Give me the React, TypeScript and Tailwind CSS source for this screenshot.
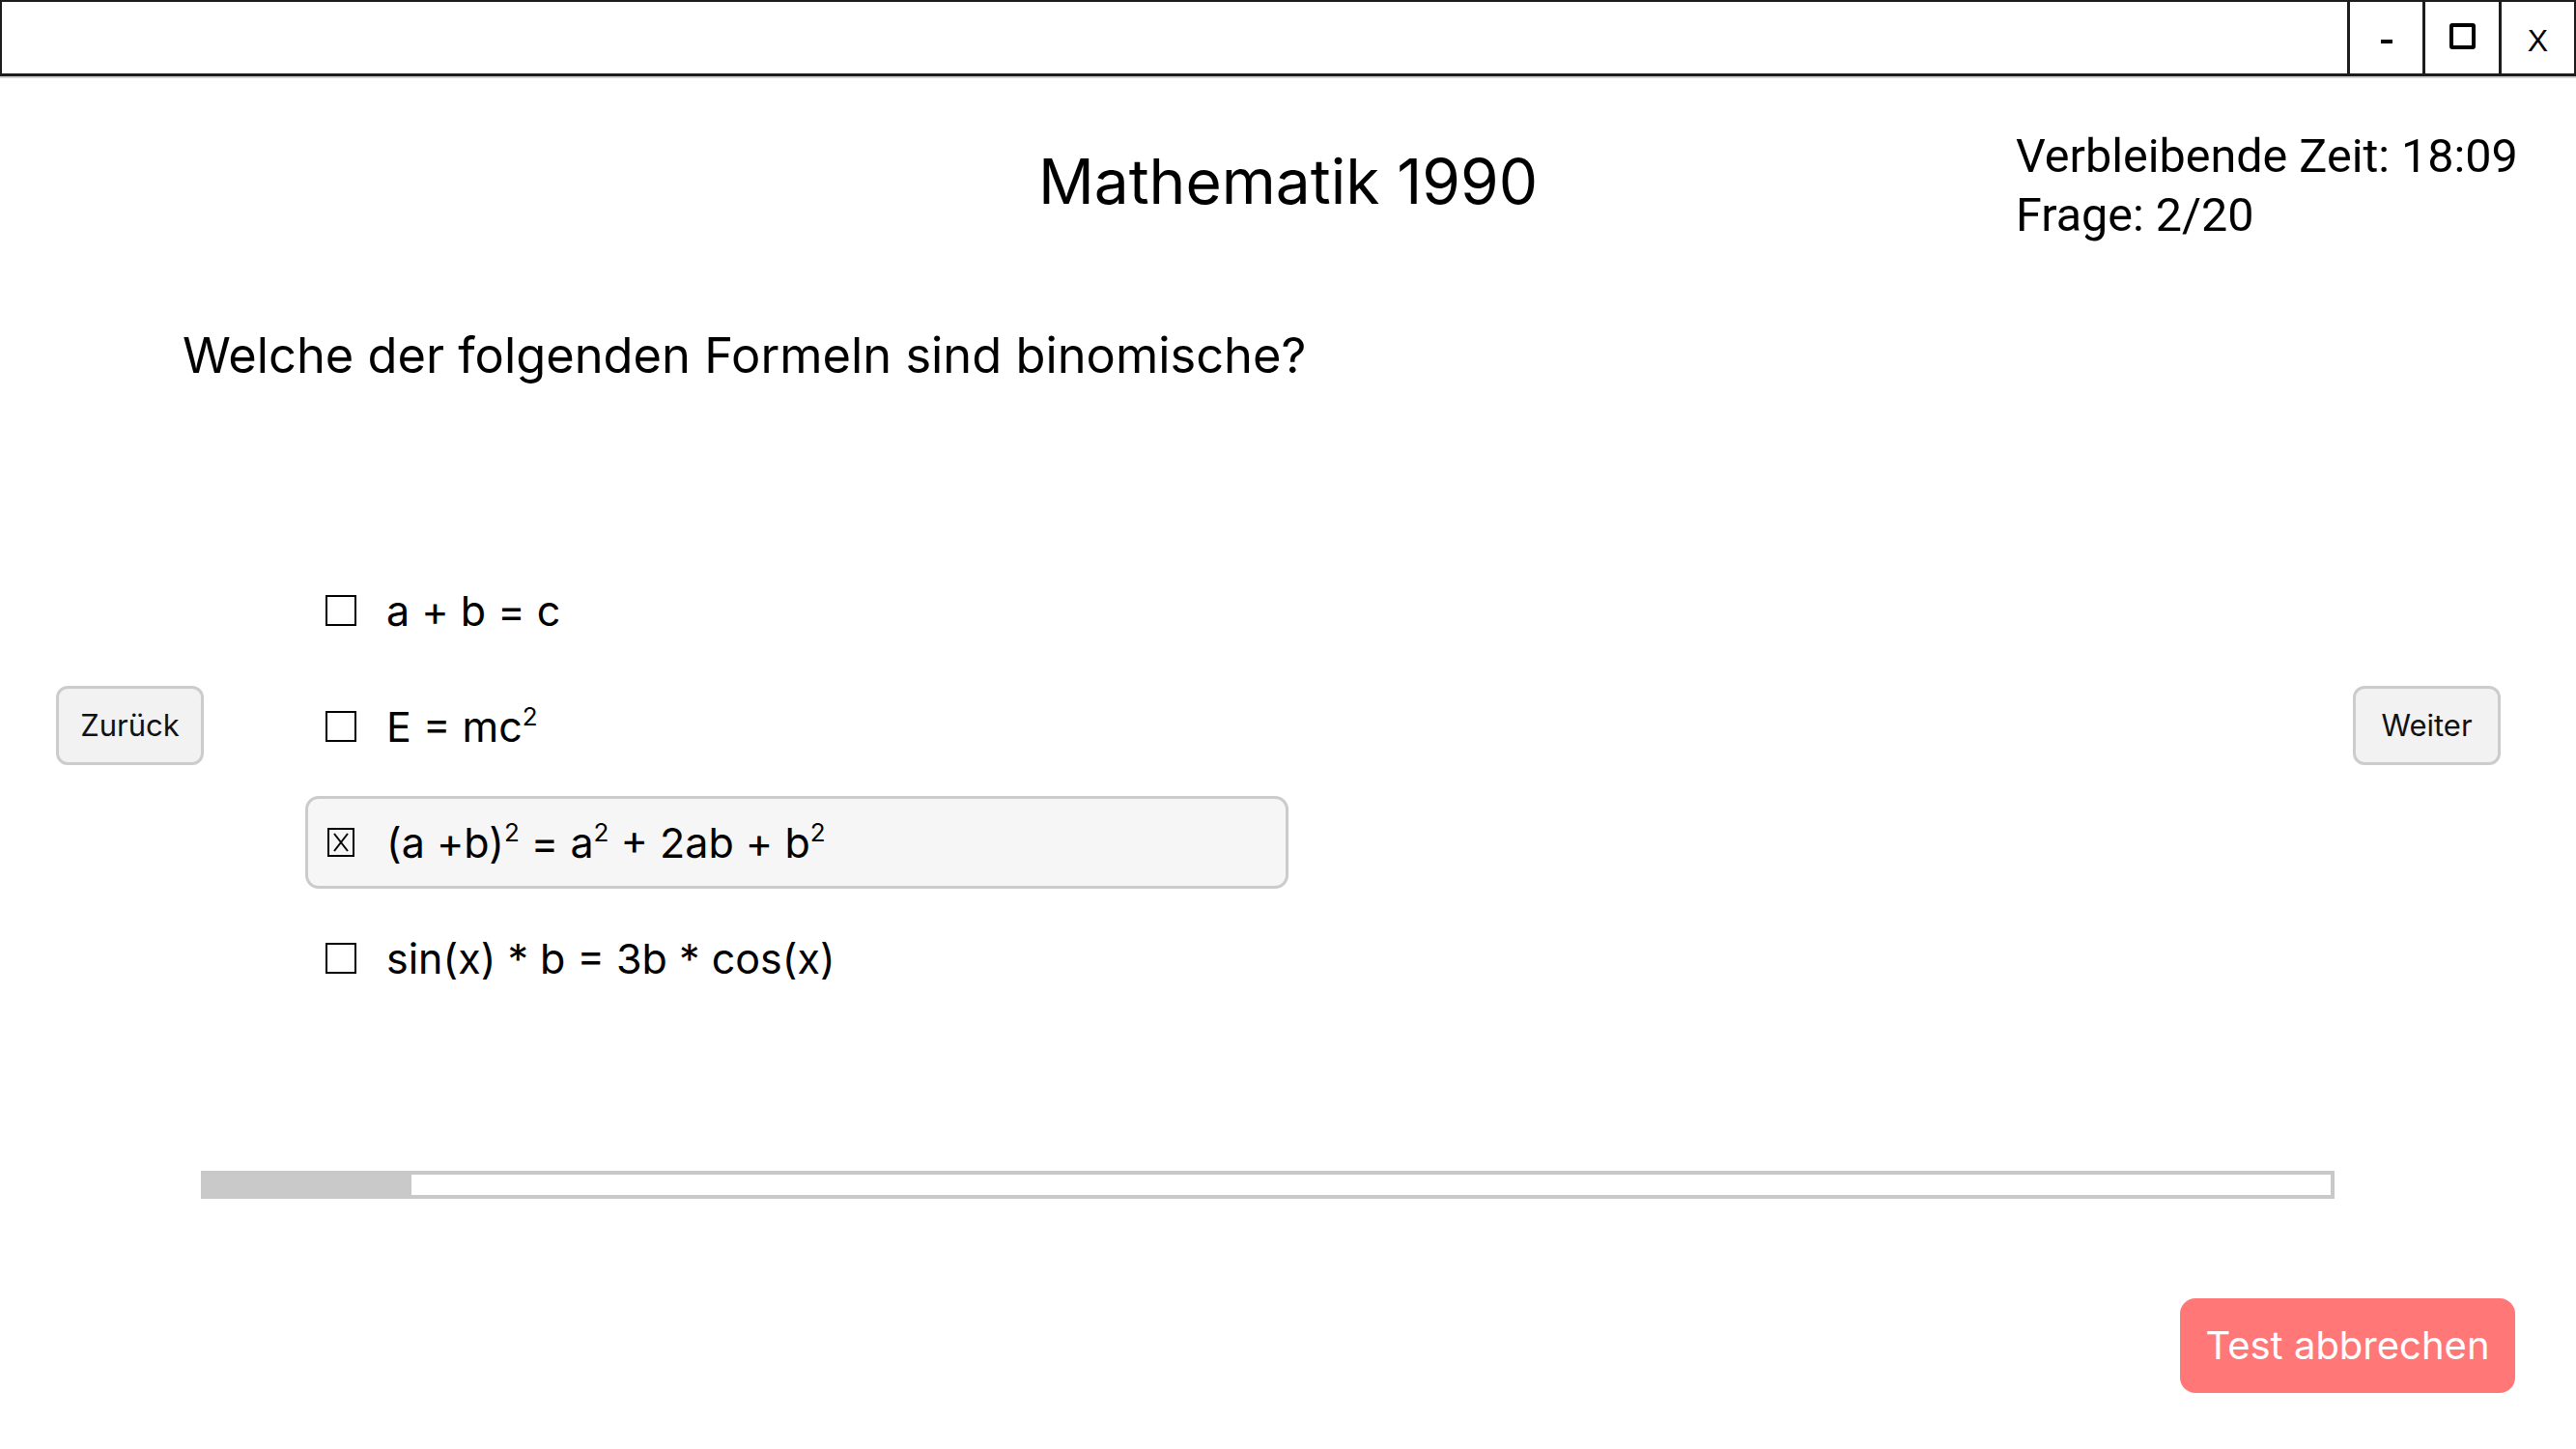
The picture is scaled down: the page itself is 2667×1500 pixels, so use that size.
import React from 'react';

const sans = 'font-[Inter,"Liberation_Sans",sans-serif]';

function Box({ checked }: { checked?: boolean }) {
  if (checked) {
    return (
      <svg width="32" height="32" viewBox="0 0 32 32" className="shrink-0">
        <rect x="3" y="2" width="26" height="28" fill="none" stroke="#000" strokeWidth="2" />
        <path d="M9 7 L23 25 M23 7 L9 25" stroke="#000" strokeWidth="2" />
      </svg>
    );
  }
  return <div className="w-[32px] h-[32px] border-2 border-black shrink-0" />;
}

function Sup({ children }: { children: React.ReactNode }) {
  return <sup className="text-[26px] -top-[17px]">{children}</sup>;
}

const options: { content: React.ReactNode; checked?: boolean }[] = [
  { content: <>a + b = c</> },
  { content: <>E = mc<Sup>2</Sup></> },
  {
    content: (
      <>
        (a +b)<Sup>2</Sup> = a<Sup>2</Sup> + 2ab + b<Sup>2</Sup>
      </>
    ),
    checked: true,
  },
  { content: <>sin(x) * b = 3b * cos(x)</> },
];

function NavButton({ label }: { label: string }) {
  return (
    <button className="w-[153px] h-[82px] rounded-[12px] border-[3px] border-[#cccccc] bg-[#f2f2f2] text-[31px] text-[#111] flex items-center justify-center">
      {label}
    </button>
  );
}

export default function App() {
  return (
    <div className={`w-[2667px] h-[1500px] bg-white text-black overflow-hidden flex flex-col ${sans}`}>
      {/* window title bar */}
      <div className="h-[79px] border-2 border-b-[3px] border-[#1c1c1c] flex shrink-0 shadow-[0_2px_0_#d0d0d0]">
        <div className="flex-1" />
        <div className="w-[78px] border-l-[3px] border-[#1c1c1c] flex items-center justify-center">
          <div className="w-[12px] h-[4px] bg-black mt-[8px]" />
        </div>
        <div className="w-[79px] border-l-[3px] border-[#1c1c1c] flex items-center justify-center">
          <div className="w-[27px] h-[27px] border-[4px] border-black rounded-[3px] -mt-[4px]" />
        </div>
        <div className="flex-1 max-w-[78px] border-l-[3px] border-[#1c1c1c] flex items-center justify-center text-[32px] font-['Liberation_Sans',sans-serif] pt-[6px]">
          X
        </div>
      </div>

      {/* header */}
      <div className="grid grid-cols-[1fr_auto_1fr] items-start">
        <div />
        <h1 className="text-[64px] leading-[64px] mt-[77px] font-normal">Mathematik 1990</h1>
        <div className="justify-self-end pr-[55px] mt-[52px] text-[48.5px] leading-[61px] font-[Roboto,'Liberation_Sans',sans-serif] w-[580px]">
          <div>Verbleibende Zeit: 18:09</div>
          <div>Frage: 2/20</div>
        </div>
      </div>

      {/* question */}
      <p className="ml-[189px] mt-[89px] text-[50.6px] leading-[52px]">Welche der folgenden Formeln sind binomische?</p>

      {/* answers + navigation */}
      <div className="flex items-start mt-[190px]">
        <div className="ml-[58px] mt-[126px]">
          <NavButton label="Zurück" />
        </div>
        <div className="ml-[105px] flex flex-col gap-[24px]">
          {options.map((o, i) => (
            <div
              key={i}
              className={`w-[1018px] h-[96px] rounded-[14px] border-[3px] flex items-center pl-[18px] gap-[31px] text-[43px] leading-[44px] ${
                o.checked ? 'border-[#cbcbcb] bg-[#f6f6f6]' : 'border-transparent'
              }`}
            >
              <Box checked={o.checked} />
              <span>{o.content}</span>
            </div>
          ))}
        </div>
        <div className="flex-1" />
        <div className="mr-[78px] mt-[126px]">
          <NavButton label="Weiter" />
        </div>
      </div>

      {/* progress */}
      <div className="ml-[208px] mt-[172px] w-[2209px] h-[29px] border-[4px] border-[#c9c9c9] bg-white">
        <div className="h-full w-[214px] bg-[#c9c9c9]" />
      </div>

      {/* cancel */}
      <div className="flex justify-end mt-[103px] pr-[63px]">
        <button className="w-[347px] h-[98px] rounded-[16px] bg-[#ff7777] text-white text-[40px] flex items-center justify-center">
          Test abbrechen
        </button>
      </div>
    </div>
  );
}
